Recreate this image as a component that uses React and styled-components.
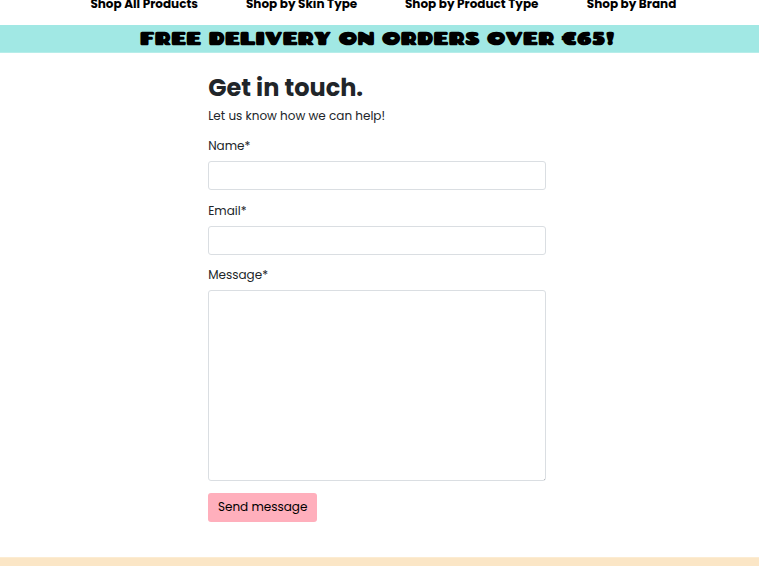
import React from "react";
import styled, { createGlobalStyle } from "styled-components";

const GlobalStyle = createGlobalStyle`
  *, *::before, *::after { box-sizing: border-box; }
  body {
    margin: 0;
    background: #fff;
    color: #212529;
    font-family: Poppins, Inter, sans-serif;
    font-size: 12px;
    overflow: hidden;
  }
`;

const Page = styled.div`
  height: 566px;
  display: flex;
  flex-direction: column;
  overflow: hidden;
`;

const Nav = styled.nav`
  flex: none;
  height: 25px;
  padding-left: 90.4px;
  display: flex;
  gap: 48px;
`;

const NavLink = styled.a`
  width: ${(p) => p.$width}px;
  margin-top: -6px;
  line-height: 20px;
  font-size: 12px;
  font-weight: 700;
  color: #000;
  white-space: nowrap;
`;

const Banner = styled.div`
  flex: none;
  height: 28px;
  padding-left: 139.8px;
  display: flex;
  align-items: flex-start;
  background: linear-gradient(#a1e8e4 27px, #b6ede9 27px);
`;

const BannerText = styled.strong`
  font-family: Chango, Poppins, sans-serif;
  font-size: 18px;
  line-height: 26px;
  font-weight: 700;
  color: #000;
  white-space: nowrap;
`;

const Form = styled.form`
  width: 338px;
  margin-left: 208.2px;
  display: flex;
  flex-direction: column;
  align-items: stretch;
`;

const Title = styled.h1`
  margin: 19px 0 0;
  font-size: 24px;
  line-height: 32px;
  font-weight: 700;
`;

const Intro = styled.p`
  margin: 2px 0 0;
  line-height: 20px;
`;

const Field = styled.div`
  display: flex;
  flex-direction: column;
  margin-top: ${(p) => p.$gap}px;
`;

const Label = styled.label`
  line-height: 20px;
  margin-bottom: 5px;
`;

const Input = styled.input`
  width: 100%;
  height: 29px;
  border: 1px solid #dadee2;
  border-radius: 3px;
  outline: none;
`;

const TextArea = styled.textarea`
  width: 100%;
  height: 191px;
  border: 1px solid #dadee2;
  border-radius: 3px;
  outline: none;
  resize: none;
  display: block;
  background: linear-gradient(#777, #777) right bottom / 1px 1px no-repeat #fff;
`;

const Submit = styled.button`
  align-self: flex-start;
  width: 109px;
  height: 28.5px;
  margin-top: 12px;
  padding: 0;
  border: 0;
  border-radius: 3px;
  background: #ffafbc;
  color: #000;
  font: inherit;
  white-space: nowrap;
`;

const Footer = styled.footer`
  flex: none;
  height: 9px;
  margin-top: auto;
  background: linear-gradient(#fcecd2 1px, #fbe6c6 1px);
`;

const links = [
  ["Shop All Products", 107.6],
  ["Shop by Skin Type", 111],
  ["Shop by Product Type", 133.8],
  ["Shop by Brand", 90],
];

export default function App() {
  return (
    <Page>
      <GlobalStyle />
      <Nav>
        {links.map(([text, width]) => (
          <NavLink key={text} $width={width}>{text}</NavLink>
        ))}
      </Nav>
      <Banner>
        <BannerText>FREE DELIVERY ON ORDERS OVER €65!</BannerText>
      </Banner>
      <Form>
        <Title>Get in touch.</Title>
        <Intro>Let us know how we can help!</Intro>
        <Field $gap={10}>
          <Label htmlFor="name">Name*</Label>
          <Input id="name" />
        </Field>
        <Field $gap={11}>
          <Label htmlFor="email">Email*</Label>
          <Input id="email" />
        </Field>
        <Field $gap={10}>
          <Label htmlFor="message">Message*</Label>
          <TextArea id="message" />
        </Field>
        <Submit type="button">Send message</Submit>
      </Form>
      <Footer />
    </Page>
  );
}
